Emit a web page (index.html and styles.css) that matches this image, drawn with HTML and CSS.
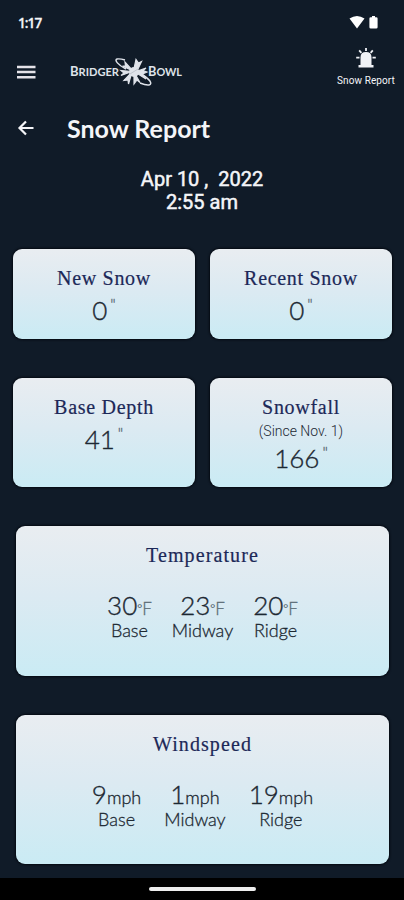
FILE: index.html
```
<!DOCTYPE html>
<html lang="en">
<head>
    <meta charset="UTF-8">
    <meta name="viewport" content="width=device-width, initial-scale=1.0">
    <title>Snow Report</title>
    <link rel="stylesheet" href="styles.css">
</head>
<body>
    <div class="status-bar">
        <span class="clock">1:17</span>
        <svg class="status-icons" width="32" height="16" viewBox="0 0 32 16">
            <path d="M.5 3.600Q8-1.800 15.500 3.600L8 13.500Z" fill="#fff"/>
            <path d="M23 1h3v1.200h1.200q1.400 0 1.400 1.400v8.600q0 1.400-1.400 1.400h-5.400q-1.400 0-1.400-1.400V3.600q0-1.400 1.400-1.400H23Z" fill="#fff"/>
        </svg>
    </div>

    <header class="header">
        <svg class="menu" width="20" height="16" viewBox="0 0 20 16">
            <path d="M1 3h18.500M1 8h18.500M1 13.200h18.500" stroke="#e4e2e8" stroke-width="2.600"/>
        </svg>
        <svg class="logo" width="116" height="32" viewBox="0 0 116 32">
            <g class="logo-text">
                <text x="2" y="19.800" textLength="49" lengthAdjust="spacingAndGlyphs"><tspan font-size="13.500">B</tspan>RIDGER</text>
                <text x="80" y="19.800" textLength="34" lengthAdjust="spacingAndGlyphs"><tspan font-size="13.500">B</tspan>OWL</text>
            </g>
            <path d="M58 13C50 9 46 4 49 3Q52 2.500 57 4M73 18C82 23 85 28 81 29Q78 29.500 72 27" fill="none" stroke="#dfe3ea" stroke-width="1.500"/>
            <path d="M65.500 15L68 3.500L70.500 7L73.500 5.500L69.500 14ZM65 15L57 6L57.500 10L54.500 10ZM64 15.500L53 14.500L56 17L53 19.500ZM64 16L56 24.500L60 24L60.500 28ZM66 16L66 28L69 24L72 26.500ZM67 16L78 23L74.500 18L79 16L75 14.500L78 12Z" fill="#dfe3ea" stroke="#dfe3ea" stroke-width="1.200"/>
            <circle cx="66" cy="16" r="5" fill="#dfe3ea"/>
            <path d="M62 18L70 13" stroke="#a9b0bb" stroke-width=".6"/>
        </svg>
        <div class="alert">
            <svg width="20" height="21" viewBox="0 0 20 21">
                <path d="M4.500 17V9.200Q4.500 4 10 4T15.500 9.200V17ZM2.500 17h15v2.600h-15Z" fill="#f0f2f6"/>
                <path d="M10 0v3M3.200 2.300l2.200 2.500M16.800 2.300l-2.200 2.500M.2 9.700h3.300M16.500 9.700h3.300" stroke="#f0f2f6" stroke-width="1.800"/>
            </svg>
            <span>Snow Report</span>
        </div>
    </header>

    <div class="title-row">
        <svg width="18" height="16" viewBox="0 0 18 16">
            <path d="M9 1.500L2.500 8L9 14.500M2.500 8H16.500" fill="none" stroke="#f4f5f8" stroke-width="2.200"/>
        </svg>
        <h1>Snow Report</h1>
    </div>

    <div class="date">
        <p>Apr 10 ,&nbsp; 2022</p>
        <p>2:55 am</p>
    </div>

    <main class="cards">
        <div class="pair">
            <section class="card">
                <h2>New Snow</h2>
                <p class="value">0<sup>"</sup></p>
            </section>
            <section class="card">
                <h2>Recent Snow</h2>
                <p class="value">0<sup>"</sup></p>
            </section>
        </div>
        <div class="pair pair-tall">
            <section class="card">
                <h2>Base Depth</h2>
                <p class="value">41<sup>"</sup></p>
            </section>
            <section class="card">
                <h2>Snowfall</h2>
                <p class="since">(Since Nov. 1)</p>
                <p class="value">166<sup>"</sup></p>
            </section>
        </div>
        <section class="card wide">
            <h2>Temperature</h2>
            <div class="readings temps">
                <div><p class="value">30<small><span class="degree">°</span>F</small></p><p class="place">Base</p></div>
                <div><p class="value">23<small><span class="degree">°</span>F</small></p><p class="place">Midway</p></div>
                <div><p class="value">20<small><span class="degree">°</span>F</small></p><p class="place">Ridge</p></div>
            </div>
        </section>
        <section class="card wide">
            <h2>Windspeed</h2>
            <div class="readings winds">
                <div><p class="value">9<small>mph</small></p><p class="place">Base</p></div>
                <div><p class="value">1<small>mph</small></p><p class="place">Midway</p></div>
                <div><p class="value">19<small>mph</small></p><p class="place">Ridge</p></div>
            </div>
        </section>
    </main>

    <footer class="nav-bar"><div class="handle"></div></footer>
</body>
</html>
```
FILE: styles.css
```
* {
    box-sizing: border-box;
}
body {
    margin: 0;
    height: 900px;
    display: flex;
    flex-direction: column;
    overflow: hidden;
    background-color: #101b28;
    color: #f4f5f8;
    font-family: Lato, sans-serif;
}
h1, h2, p {
    margin: 0;
    font-weight: normal;
}
.status-bar {
    height: 46px;
    padding: 15px 23px 0 18px;
    display: flex;
    justify-content: space-between;
}
.clock {
    font: 600 13.5px/16px "Open Sans", sans-serif;
    letter-spacing: -0.9px;
    -webkit-text-stroke: 0.3px #f4f5f8;
}
.header {
    height: 54px;
    display: flex;
    align-items: flex-start;
    padding-left: 16px;
}
.menu {
    margin-top: 18px;
}
.logo {
    margin: 10px 0 0 32px;
}
.logo-text {
    font-family: Lato, sans-serif;
    font-weight: 700;
    font-size: 11.5px;
    fill: #dfe3ea;
}
.alert {
    width: 60px;
    margin-left: auto;
    margin-right: 8px;
    padding-top: 2px;
    display: flex;
    flex-direction: column;
    align-items: center;
    font: 400 10px/12px Roboto, sans-serif;
    letter-spacing: 0.1px;
    white-space: nowrap;
}
.alert span {
    margin-top: 6px;
}
.title-row {
    height: 56px;
    padding-left: 17px;
    display: flex;
    align-items: center;
    gap: 32px;
}
.title-row h1 {
    font-size: 25px;
    line-height: 30px;
    font-weight: 700;
    padding-bottom: 1px;
}
.date {
    height: 93px;
    padding-top: 12px;
    text-align: center;
    font: 500 20px/23px Roboto, sans-serif;
    -webkit-text-stroke: 0.5px #f4f5f8;
}
.cards {
    display: flex;
    flex-direction: column;
    gap: 39px;
    padding: 0 12px 0 13px;
    flex: 1;
}
.pair {
    display: grid;
    grid-template-columns: 1fr 1fr;
    gap: 15px;
    height: 90px;
}
.pair-tall {
    height: 109px;
}
.card {
    padding-top: 17px;
    border-radius: 9px;
    background: linear-gradient(#e9edf1, #dceaf2 45%, #caebf4);
    box-shadow: 0 0 2px 1px #050a12;
    color: #1c2832;
    text-align: center;
}
.card h2 {
    font: 20px/24px "Liberation Serif", serif;
    letter-spacing: 0.7px;
    color: #1c2858;
    -webkit-text-stroke: 0.2px #1c2858;
}
.card.wide {
    height: 149.5px;
    margin: 0 3px;
}
.wide h2 {
    letter-spacing: 1.1px;
}
.value {
    font-size: 26px;
    font-weight: 300;
    line-height: 32px;
    margin-top: 4px;
    -webkit-text-stroke: 0.35px;
}
.value sup {
    font-size: 16px;
    line-height: 0;
    margin-left: 3px;
    color: #5e6e78;
}
.since {
    font: 300 14px/18px Roboto, sans-serif;
    margin-top: 3px;
}
.since + .value {
    margin-top: 2px;
}
.readings {
    display: flex;
    justify-content: center;
    margin-top: 20px;
}
.readings .value {
    line-height: 25px;
    margin-top: 6px;
}
.readings small {
    font-size: 18px;
}
.temps small {
    font-size: 17px;
    color: #5e6e78;
}
.degree {
    font-size: 12px;
    line-height: 0;
    vertical-align: 2px;
}
.place {
    font-size: 18px;
    font-weight: 300;
    line-height: 18px;
    -webkit-text-stroke: 0.3px;
}
.temps {
    gap: 20px;
}
.winds {
    gap: 23px;
}
.nav-bar {
    height: 22px;
    background: #000;
    display: flex;
    justify-content: center;
    padding-top: 9px;
}
.handle {
    width: 107px;
    height: 4px;
    border-radius: 2px;
    background: #eee;
}
```
